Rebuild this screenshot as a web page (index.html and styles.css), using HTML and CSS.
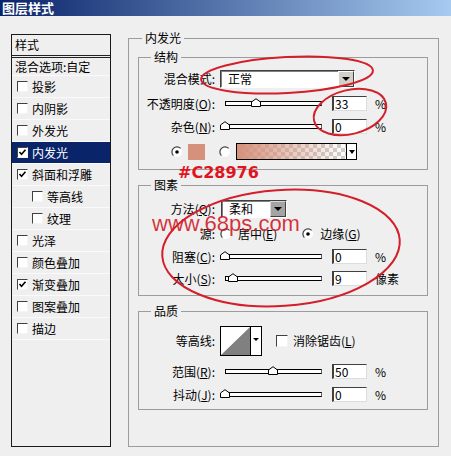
FILE: index.html
```html
<!DOCTYPE html>
<html>
<head>
<meta charset="utf-8">
<link rel="stylesheet" href="styles.css">
</head>
<body>
<div class="title">图层样式</div>
<div class="main">
  <div class="list">
    <div class="list-head">样式</div>
    <div class="blend">混合选项:自定</div>
    <div class="item"><span class="cb"></span>投影</div>
    <div class="item"><span class="cb"></span>内阴影</div>
    <div class="item"><span class="cb"></span>外发光</div>
    <div class="item sel"><span class="cb"><svg viewBox="0 0 9 9" width="9" height="9"><path d="M1.5 4 L3.5 6.2 L7.5 1.8" fill="none" stroke="#000" stroke-width="1.6"/></svg></span>内发光</div>
    <div class="item"><span class="cb"><svg viewBox="0 0 9 9" width="9" height="9"><path d="M1.5 4 L3.5 6.2 L7.5 1.8" fill="none" stroke="#000" stroke-width="1.6"/></svg></span>斜面和浮雕</div>
    <div class="item sub"><span class="cb"></span>等高线</div>
    <div class="item sub"><span class="cb"></span>纹理</div>
    <div class="item"><span class="cb"></span>光泽</div>
    <div class="item"><span class="cb"></span>颜色叠加</div>
    <div class="item"><span class="cb"><svg viewBox="0 0 9 9" width="9" height="9"><path d="M1.5 4 L3.5 6.2 L7.5 1.8" fill="none" stroke="#000" stroke-width="1.6"/></svg></span>渐变叠加</div>
    <div class="item"><span class="cb"></span>图案叠加</div>
    <div class="item"><span class="cb"></span>描边</div>
  </div>

  <fieldset class="outer">
    <legend>内发光</legend>

    <fieldset class="grp g1">
      <legend>结构</legend>
      <div class="row r-sel">
        <span class="lbl">混合模式:</span>
        <div class="select wide"><span class="val">正常</span><span class="btn"><i class="arrow"></i></span></div>
      </div>
      <div class="row r2">
        <span class="lbl">不透明度(<u>O</u>):</span>
        <div class="slider"><div class="track"></div><svg class="thumb" style="left:31px" viewBox="0 0 10 9" width="10" height="9"><path d="M0.5 8.5 V4 L5 0.7 L9.5 4 V8.5 Z" fill="#fff" stroke="#000"/></svg></div>
        <span class="num">33</span><span class="unit">%</span>
      </div>
      <div class="row r3">
        <span class="lbl">杂色(<u>N</u>):</span>
        <div class="slider"><div class="track"></div><svg class="thumb" style="left:0px" viewBox="0 0 10 9" width="10" height="9"><path d="M0.5 8.5 V4 L5 0.7 L9.5 4 V8.5 Z" fill="#fff" stroke="#000"/></svg></div>
        <span class="num">0</span><span class="unit">%</span>
      </div>
      <div class="row color-row">
        <svg class="radio" viewBox="0 0 12 12" width="12" height="12"><circle cx="6" cy="6" r="5" fill="#fff"/><path d="M2.4 9.6 A5 5 0 0 1 9.6 2.4" fill="none" stroke="#404040" stroke-width="1.2"/><circle cx="6" cy="6" r="1.8" fill="#000"/></svg>
        <span class="swatch"></span>
        <svg class="radio r-off" viewBox="0 0 12 12" width="12" height="12"><circle cx="6" cy="6" r="5" fill="#fff"/><path d="M2.4 9.6 A5 5 0 0 1 9.6 2.4" fill="none" stroke="#404040" stroke-width="1.2"/></svg>
        <div class="grad"><span class="grad-fill"></span><span class="grad-btn"><i class="arrow"></i></span></div>
      </div>
    </fieldset>

    <fieldset class="grp g2">
      <legend>图素</legend>
      <div class="row r-sel">
        <span class="lbl">方法(<u>Q</u>):</span>
        <div class="select narrow"><span class="val">柔和</span><span class="btn dark"><i class="arrow"></i></span></div>
      </div>
      <div class="row r-src">
        <span class="lbl">源:</span>
        <svg class="radio" viewBox="0 0 12 12" width="12" height="12"><circle cx="6" cy="6" r="5" fill="#fff"/><path d="M2.4 9.6 A5 5 0 0 1 9.6 2.4" fill="none" stroke="#404040" stroke-width="1.2"/></svg>
        <span class="rtext">居中(<u>E</u>)</span>
        <svg class="radio r2nd" viewBox="0 0 12 12" width="12" height="12"><circle cx="6" cy="6" r="5" fill="#fff"/><path d="M2.4 9.6 A5 5 0 0 1 9.6 2.4" fill="none" stroke="#404040" stroke-width="1.2"/><circle cx="6" cy="6" r="1.8" fill="#000"/></svg>
        <span class="rtext">边缘(<u>G</u>)</span>
      </div>
      <div class="row r3b">
        <span class="lbl">阻塞(<u>C</u>):</span>
        <div class="slider"><div class="track"></div><svg class="thumb" style="left:0px" viewBox="0 0 10 9" width="10" height="9"><path d="M0.5 8.5 V4 L5 0.7 L9.5 4 V8.5 Z" fill="#fff" stroke="#000"/></svg></div>
        <span class="num">0</span><span class="unit">%</span>
      </div>
      <div class="row r4b">
        <span class="lbl">大小(<u>S</u>):</span>
        <div class="slider"><div class="track"></div><svg class="thumb" style="left:8px" viewBox="0 0 10 9" width="10" height="9"><path d="M0.5 8.5 V4 L5 0.7 L9.5 4 V8.5 Z" fill="#fff" stroke="#000"/></svg></div>
        <span class="num">9</span><span class="unit">像素</span>
      </div>
    </fieldset>

    <fieldset class="grp g3">
      <legend>品质</legend>
      <div class="row r-contour">
        <span class="lbl">等高线:</span>
        <div class="contour">
          <svg class="curve" viewBox="0 0 29 28" width="29" height="28"><rect width="29" height="28" fill="#fff"/><path d="M0 28 L29 0 V28 Z" fill="#808080"/></svg>
          <span class="contour-btn"><i class="arrow small"></i></span>
        </div>
        <span class="cb big"></span>
        <span class="cbtext">消除锯齿(<u>L</u>)</span>
      </div>
      <div class="row r2c">
        <span class="lbl">范围(<u>R</u>):</span>
        <div class="slider"><div class="track"></div><svg class="thumb" style="left:48px" viewBox="0 0 10 9" width="10" height="9"><path d="M0.5 8.5 V4 L5 0.7 L9.5 4 V8.5 Z" fill="#fff" stroke="#000"/></svg></div>
        <span class="num">50</span><span class="unit">%</span>
      </div>
      <div class="row r3c">
        <span class="lbl">抖动(<u>J</u>):</span>
        <div class="slider"><div class="track"></div><svg class="thumb" style="left:0px" viewBox="0 0 10 9" width="10" height="9"><path d="M0.5 8.5 V4 L5 0.7 L9.5 4 V8.5 Z" fill="#fff" stroke="#000"/></svg></div>
        <span class="num">0</span><span class="unit">%</span>
      </div>
    </fieldset>
  </fieldset>
</div>

<div class="note-hex">#C28976</div>
<div class="note-url">www.68ps.com</div>
<svg class="annot" viewBox="0 0 451 456" width="451" height="456">
  <g fill="none" stroke="#d41e2a" stroke-width="2">
    <ellipse cx="287" cy="75" rx="86" ry="18" transform="rotate(-3 287 75)"/>
    <ellipse cx="350" cy="112" rx="37" ry="22" transform="rotate(-14 350 112)"/>
    <ellipse cx="281" cy="248" rx="119" ry="58" transform="rotate(-4 281 248)"/>
  </g>
</svg>
</body>
</html>
```

FILE: styles.css
```css
html, body {
  margin: 0;
  padding: 0;
}
body {
  width: 451px;
  height: 456px;
  overflow: hidden;
  position: relative;
  background: #efefef;
  font-family: "Noto Sans CJK SC", "Liberation Sans", sans-serif;
  font-size: 12px;
  line-height: 14px;
  color: #000;
}
u { text-decoration: underline; }

.title {
  height: 16px;
  line-height: 16px;
  padding-left: 2px;
  background: linear-gradient(to right, #0a246a, #a6caf0);
  color: #fff;
  font-weight: bold;
  font-size: 13px;
}

.main {
  display: flex;
  align-items: flex-start;
}

/* left style list */
.list {
  margin: 18px 0 0 11px;
  width: 100px;
  height: 413px;
  box-sizing: border-box;
  border: 1px solid #1a1a1a;
  flex: none;
}
.list-head {
  height: 20px;
  line-height: 20px;
  padding-left: 3px;
  border-bottom: 3px double #222;
}
.blend {
  height: 17px;
  line-height: 17px;
  padding-left: 3px;
  border-bottom: 1px solid #fafafa;
}
.item {
  height: 21px;
  border-bottom: 1px solid #fafafa;
  display: flex;
  align-items: center;
  padding-left: 5px;
  gap: 4px;
}
.item.sub { padding-left: 20px; }
.item.sel {
  background: #0a246a;
  color: #fff;
}
.cb {
  width: 11px;
  height: 11px;
  box-sizing: border-box;
  border-top: 1px solid #404040;
  border-left: 1px solid #404040;
  border-right: 1px solid #f4f4f4;
  border-bottom: 1px solid #f4f4f4;
  background: #fff;
  display: flex;
  align-items: center;
  justify-content: center;
  flex: none;
}
.cb svg { display: block; }

/* right panel */
.outer {
  margin: 15px 0 0 17px;
  width: 311px;
  height: 416px;
  box-sizing: border-box;
  border: 1px solid #9c9c9c;
  padding: 5px 10px 0 9px;
  min-width: 0;
  flex: none;
}
legend {
  padding: 0 3px;
  line-height: 14px;
}
.outer > legend { margin-left: 4px; }
.grp {
  margin: 0;
  width: 290px;
  box-sizing: border-box;
  border: 1px solid #9c9c9c;
  padding: 6px 0 9px 0;
  min-width: 0;
}
.grp > legend { margin-left: 12px; }
.grp + .grp { margin-top: 8px; }
.g2 { padding-top: 8px; padding-bottom: 8px; }
.g3 { padding-top: 8px; padding-bottom: 6px; }

.row {
  display: flex;
  align-items: center;
  height: 17px;
}
.lbl {
  width: 76px;
  flex: none;
  text-align: right;
  margin-right: 5px;
  white-space: nowrap;
}
.r-sel { height: 18px; }
.r2 { margin-top: 7px; }
.r3 { margin-top: 6px; }
.color-row { margin-top: 8px; }
.r-src { margin-top: 8px; height: 16px; }
.r3b { margin-top: 6px; }
.r4b { margin-top: 5px; }
.r-contour { height: 30px; }
.r2c { margin-top: 7px; }
.r3c { margin-top: 6px; }

/* select */
.select {
  display: flex;
  height: 18px;
  box-sizing: border-box;
  border-top: 1px solid #404040;
  border-left: 1px solid #404040;
  border-right: 1px solid #fff;
  border-bottom: 1px solid #fff;
  box-shadow: inset 1px 1px 0 #808080;
  background: #fff;
  flex: none;
}
.select.wide { width: 135px; }
.select.narrow { width: 66px; margin-left: 1px; }
.select .val {
  flex: 1;
  padding-left: 7px;
  line-height: 16px;
}
.select .btn {
  width: 16px;
  box-sizing: border-box;
  background: #d4d0c8;
  border-top: 1px solid #fff;
  border-left: 1px solid #fff;
  border-right: 1px solid #404040;
  border-bottom: 1px solid #404040;
  display: flex;
  align-items: center;
  justify-content: center;
}
.select .btn.dark {
  background: #a4a4a4;
  border-color: #d8d8d8 #404040 #404040 #d8d8d8;
}
.arrow {
  display: block;
  width: 0;
  height: 0;
  border-left: 4px solid transparent;
  border-right: 4px solid transparent;
  border-top: 4px solid #000;
}
.arrow.small {
  border-left-width: 3px;
  border-right-width: 3px;
  border-top-width: 3px;
}

/* slider */
.slider {
  position: relative;
  width: 107px;
  height: 17px;
  flex: none;
  margin-right: 5px;
}
.track {
  margin: 6px 5px 0;
  height: 5px;
  box-sizing: border-box;
  border: 1px solid #000;
  border-right-color: #606060;
  background: #fff;
}
.thumb {
  position: absolute;
  top: 3px;
  display: block;
}

.num {
  width: 35px;
  height: 15px;
  box-sizing: border-box;
  border-top: 1px solid #404040;
  border-left: 2px solid #404040;
  border-right: 1px solid #dcdcdc;
  border-bottom: 1px solid #dcdcdc;
  background: #fff;
  padding-left: 1px;
  line-height: 13px;
  margin-right: 8px;
  flex: none;
}
.unit { white-space: nowrap; }

/* color row */
.radio { display: block; flex: none; }
.color-row .radio { margin-left: 32px; }
.color-row .radio.r-off { margin-left: 14px; }
.swatch {
  width: 17px;
  height: 16px;
  margin-left: 5px;
  background: #d5917c;
  flex: none;
}
.grad {
  display: flex;
  width: 121px;
  height: 17px;
  margin-left: 5px;
  box-sizing: border-box;
  border: 1px solid #000;
  flex: none;
}
.grad-fill {
  flex: 1;
  background:
    linear-gradient(to right, #d5917c, rgba(213,145,124,0)),
    repeating-conic-gradient(#cfcfcf 0 25%, #fff 0 50%) 0 0 / 8px 8px;
}
.grad-btn {
  width: 9px;
  border-left: 1px solid #000;
  background: #fff;
  display: flex;
  align-items: center;
  justify-content: center;
}
.grad-btn .arrow {
  border-left-width: 3px;
  border-right-width: 3px;
}

/* source row */
.r-src .radio { margin-left: 0; }
.rtext { margin-left: 6px; white-space: nowrap; }
.r-src .r2nd { margin-left: 25px; }

/* contour */
.contour {
  display: flex;
  width: 42px;
  height: 30px;
  box-sizing: border-box;
  border: 1px solid #000;
  flex: none;
}
.curve { display: block; }
.contour-btn {
  flex: 1;
  border-left: 1px solid #000;
  background: #fff;
  display: flex;
  justify-content: center;
  padding-top: 11px;
  box-sizing: border-box;
}
.cb.big {
  width: 12px;
  height: 12px;
  margin-left: 14px;
}
.cbtext { margin-left: 5px; white-space: nowrap; }

/* annotations drawn over the screenshot */
.annot {
  position: absolute;
  left: 0;
  top: 0;
  pointer-events: none;
}
.note-hex {
  position: absolute;
  left: 178px;
  top: 165px;
  font-family: "DejaVu Sans", sans-serif;
  font-weight: bold;
  font-size: 16px;
  line-height: 16px;
  color: #e0141e;
}
.note-url {
  position: absolute;
  left: 152px;
  top: 213px;
  font-family: "Liberation Sans", sans-serif;
  font-size: 22px;
  line-height: 22px;
  color: rgba(208, 22, 36, 0.88);
}
```
